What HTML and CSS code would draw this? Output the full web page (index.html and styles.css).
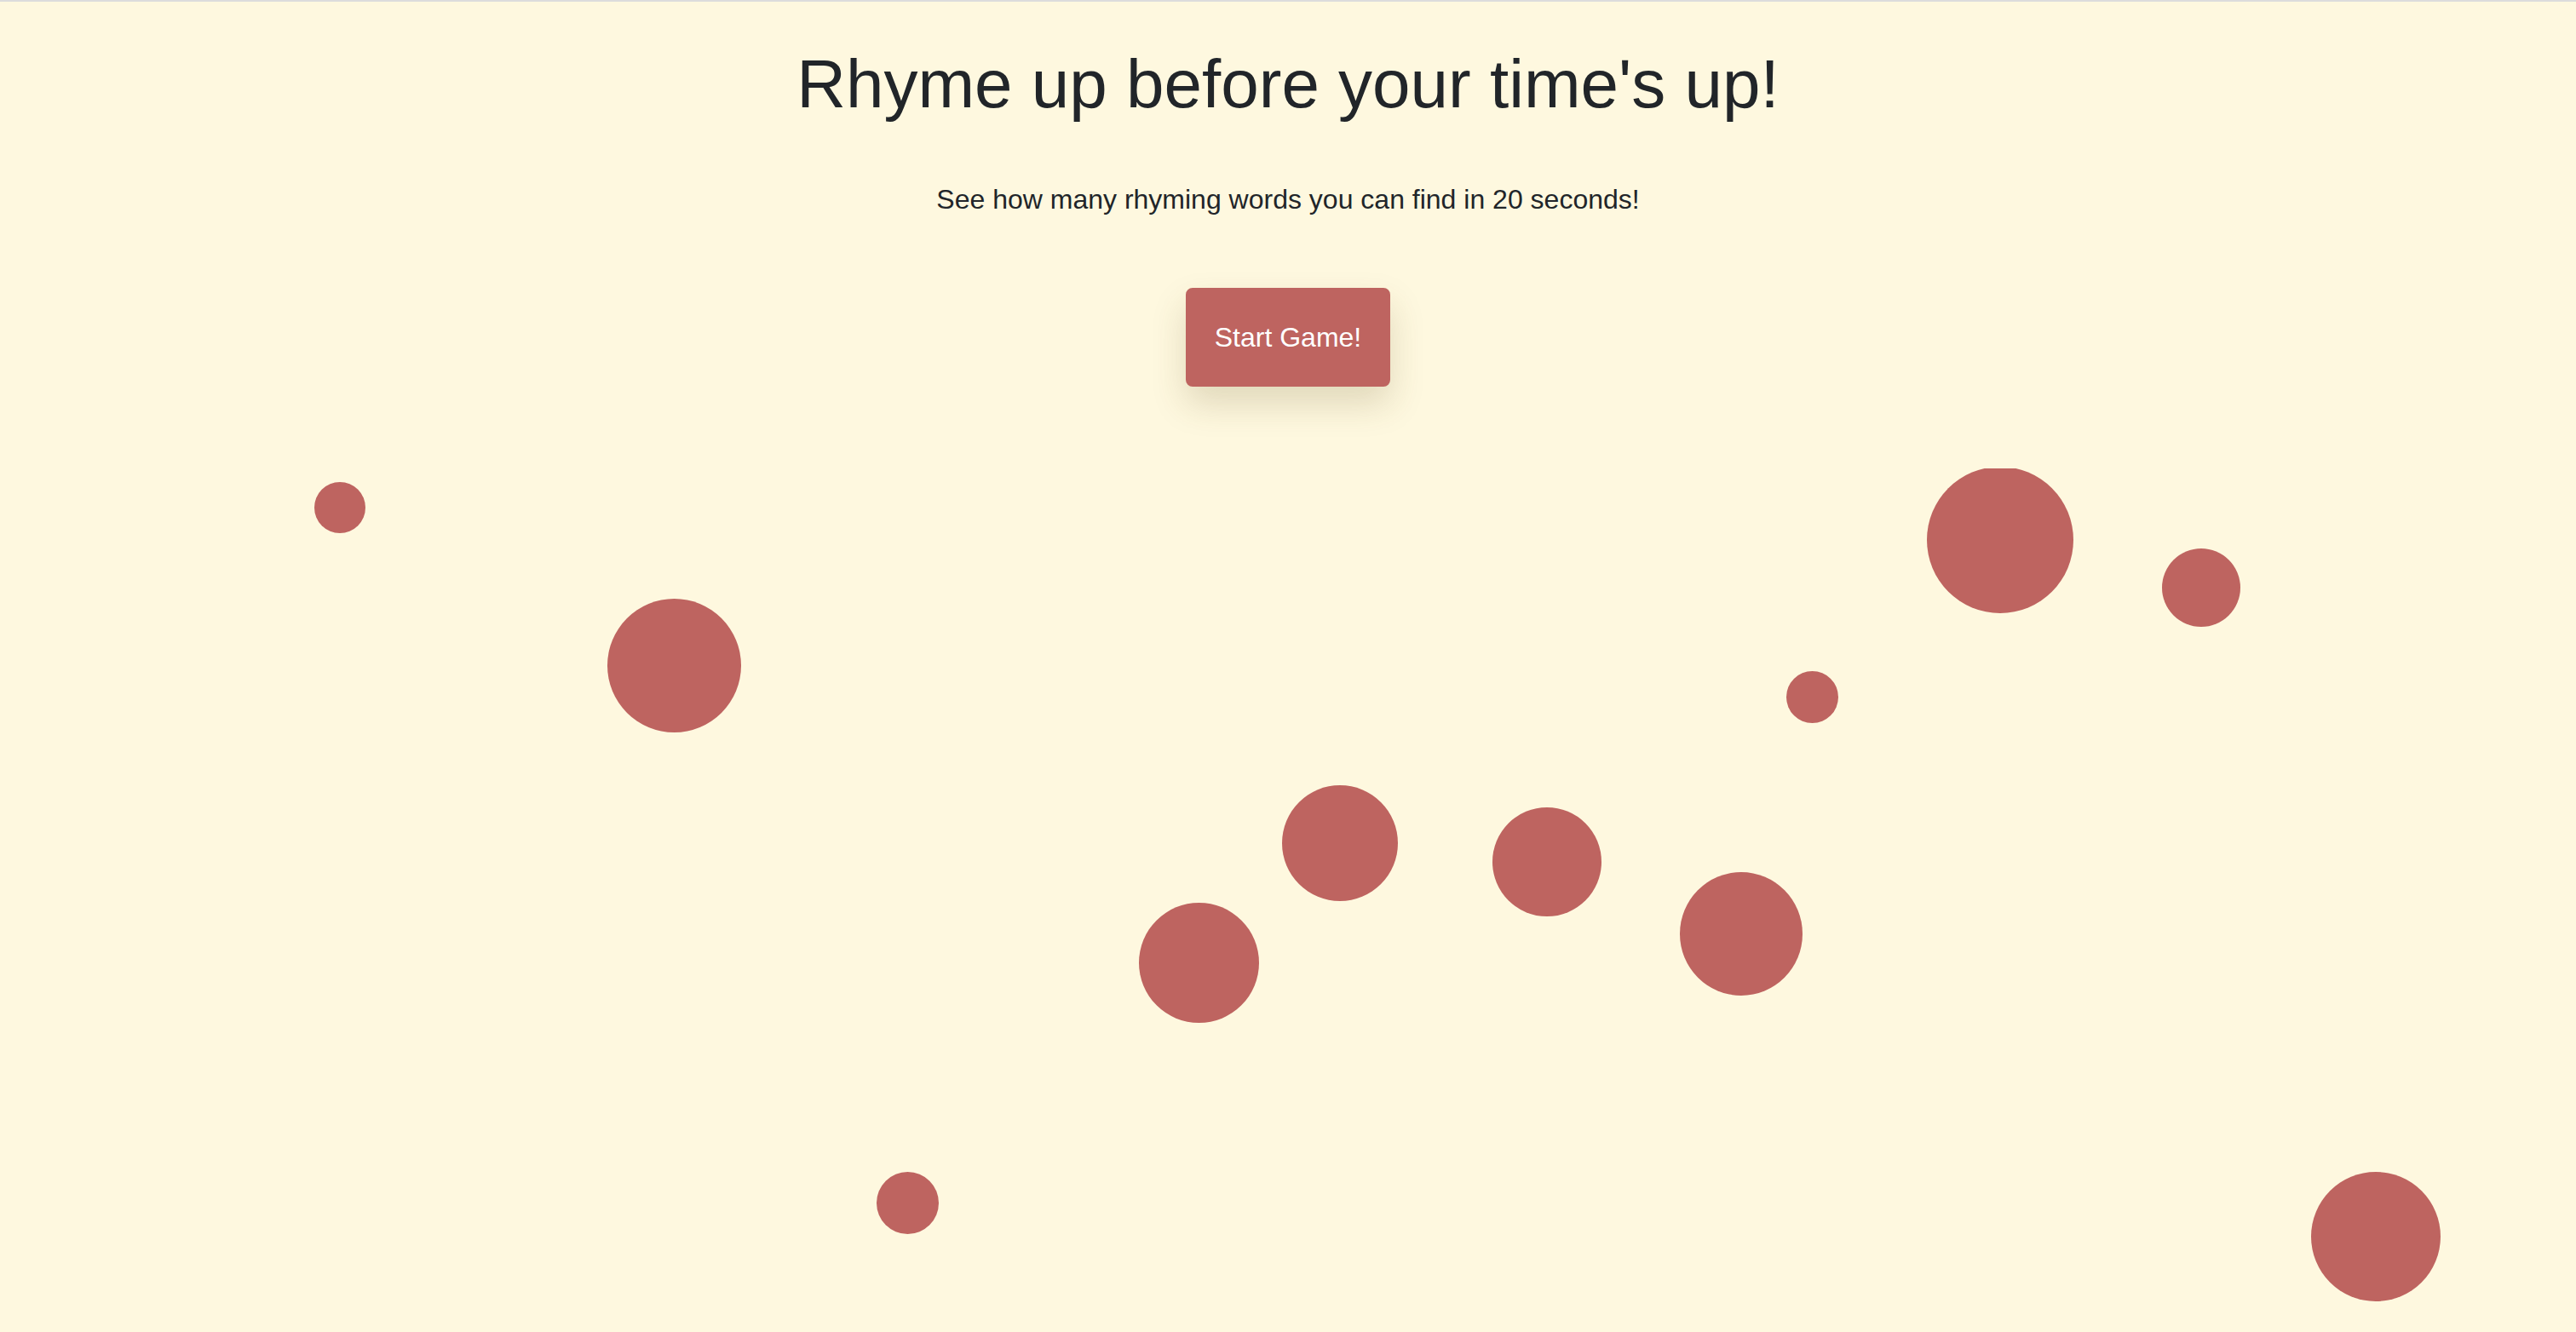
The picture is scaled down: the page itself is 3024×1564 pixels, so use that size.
FILE: index.html
```html
<!DOCTYPE html>
<html lang="en">
<head>
<meta charset="utf-8">
<title>Rhyme up before your time's up!</title>
<link rel="stylesheet" href="styles.css">
</head>
<body>
<header class="intro">
  <h1 class="title">Rhyme up before your time's up!</h1>
  <p class="lead">See how many rhyming words you can find in 20 seconds!</p>
  <button class="start-btn" type="button">Start Game!</button>
</header>
<main class="stage">
  <span class="bubble" style="left:369px;top:16px;width:60px;height:60px"></span>
  <span class="bubble" style="left:713px;top:153px;width:157px;height:157px"></span>
  <span class="bubble" style="left:2262px;top:-2px;width:172px;height:172px"></span>
  <span class="bubble" style="left:2538px;top:94px;width:92px;height:92px"></span>
  <span class="bubble" style="left:2097px;top:238px;width:61px;height:61px"></span>
  <span class="bubble" style="left:1505px;top:372px;width:136px;height:136px"></span>
  <span class="bubble" style="left:1752px;top:398px;width:128px;height:128px"></span>
  <span class="bubble" style="left:1337px;top:510px;width:141px;height:141px"></span>
  <span class="bubble" style="left:1972px;top:474px;width:144px;height:145px"></span>
  <span class="bubble" style="left:1029px;top:826px;width:73px;height:73px"></span>
  <span class="bubble" style="left:2713px;top:826px;width:152px;height:152px"></span>
</main>
</body>
</html>
```

FILE: styles.css
```css
html, body {
  margin: 0;
  padding: 0;
  height: 100%;
}
body {
  background: #fef8df;
  border-top: 2px solid #dcdcdc;
  box-sizing: border-box;
  font-family: "Liberation Sans", Arial, Helvetica, sans-serif;
  color: #212529;
  overflow: hidden;
  display: flex;
  flex-direction: column;
}
.intro {
  display: flex;
  flex-direction: column;
  align-items: center;
  padding-top: 49px;
}
.title {
  margin: 0;
  font-size: 80px;
  line-height: 96px;
  font-weight: 400;
}
.lead {
  margin: 63px 0 0;
  font-size: 32px;
  line-height: 48px;
}
.start-btn {
  margin-top: 80px;
  font-family: inherit;
  font-size: 32px;
  line-height: 48px;
  color: #ffffff;
  background: #be6460;
  border: 2px solid #be6460;
  border-radius: 8px;
  padding: 32px 32px;
  box-shadow: 0 20px 40px rgba(90, 70, 20, 0.18);
}
.stage {
  position: relative;
  flex: 1;
  margin-top: 96px;
  overflow: hidden;
}
.bubble {
  position: absolute;
  border-radius: 50%;
  background: #be6460;
}
```
